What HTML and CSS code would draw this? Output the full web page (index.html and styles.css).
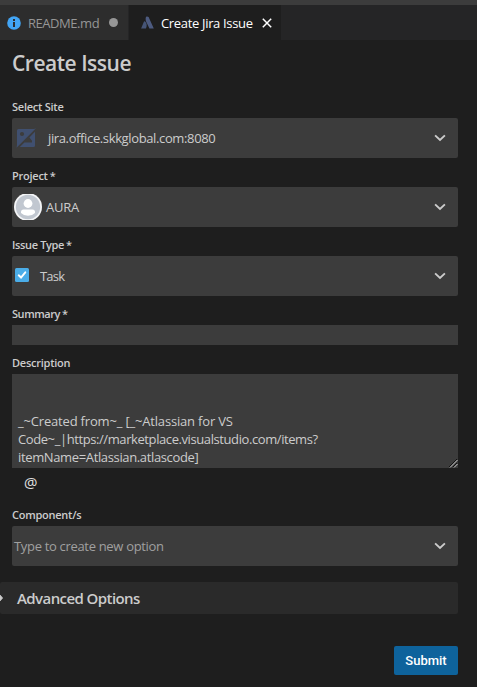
FILE: index.html
```html
<!DOCTYPE html>
<html lang="en">
<head>
<meta charset="utf-8">
<title>Create Jira Issue</title>
<link rel="stylesheet" href="styles.css">
</head>
<body>
<nav class="tabs">
  <div class="tab">
    <svg class="info" width="14" height="14" viewBox="0 0 14 14"><circle cx="7" cy="7" r="6.8" fill="#42a5f5"/><path d="M6 3h2v2H6zM6 6h2v5H6z" fill="#2d2d2d"/></svg>
    <span class="readme">README.md</span>
    <span class="dirty"></span>
  </div>
  <div class="tab active">
    <svg class="atlas" width="13" height="13" viewBox="0 0 13 13"><path d="M5 .8Q6.3 0 7.6 1L12.8 12.4H8.4L6.3 8Q3.8 4 5 .8Z" fill="#4d5b80"/><path d="M3 5.4Q3.8 5 4.4 5.8Q6.7 8.5 5 12.4H.1Z" fill="#465577"/></svg>
    <span class="jira">Create Jira Issue</span>
    <svg class="close" width="10" height="10" viewBox="0 0 10 10"><path d="M.8.8l8.4 8.4M9.2.8L.8 9.2" stroke="#fff" stroke-width="1.5"/></svg>
  </div>
</nav>
<main class="page">
  <h1><span class="title">Create Issue</span></h1>
  <section class="field">
    <label><span class="l-site">Select Site</span></label>
    <div class="select">
      <svg class="site-icon" width="20" height="20" viewBox="0 0 20 20"><path d="M2.5 1H18L20 .3L.5 19.8L1 17V2.5Q1 1 2.5 1Z" fill="#405070"/><path d="M19 3.8V17.5Q19 19 17.5 19H3.8L8.4 14.4H16V12.8L13.4 9.4Z" fill="#405070"/><circle cx="6" cy="6" r="2.1" fill="#3c3c3c"/></svg>
      <span class="t-site">jira.office.skkglobal.com:8080</span>
      <svg class="chevron" width="12" height="8" viewBox="0 0 12 8"><path d="M1.1 1.4L6 6L10.9 1.4" fill="none" stroke="#ccc" stroke-width="1.9"/></svg>
    </div>
  </section>
  <section class="field">
    <label><span class="l-project">Project</span><span class="star">*</span></label>
    <div class="select">
      <svg class="avatar" width="28" height="26" viewBox="0 1 28 26"><circle cx="14" cy="14" r="14" fill="#f4f5f7"/><circle cx="14" cy="14" r="12.2" fill="#c1c7d0"/><circle cx="14" cy="10.5" r="4.4" fill="#fff"/><path d="M7 19Q7 16.5 9.5 16.5H18.5Q21 16.5 21 19V20Q18.5 22.7 14 22.7T7 20Z" fill="#fff"/></svg>
      <span class="t-aura">AURA</span>
      <svg class="chevron" width="12" height="8" viewBox="0 0 12 8"><path d="M1.1 1.4L6 6L10.9 1.4" fill="none" stroke="#ccc" stroke-width="1.9"/></svg>
    </div>
  </section>
  <section class="field">
    <label><span class="l-type">Issue Type</span><span class="star">*</span></label>
    <div class="select">
      <svg class="task-icon" width="14" height="14" viewBox="0 0 14 14"><rect width="14" height="14" rx="1.5" fill="#4bade8"/><path d="M3.7 7.3L6 9.5L10.3 4.3" fill="none" stroke="#fff" stroke-width="1.9" stroke-linecap="round"/></svg>
      <span class="t-task">Task</span>
      <svg class="chevron" width="12" height="8" viewBox="0 0 12 8"><path d="M1.1 1.4L6 6L10.9 1.4" fill="none" stroke="#ccc" stroke-width="1.9"/></svg>
    </div>
  </section>
  <section class="field">
    <label><span class="l-summary">Summary</span><span class="star">*</span></label>
    <div class="summary"></div>
  </section>
  <section class="field">
    <label><span class="l-desc">Description</span></label>
    <div class="description">
      <div><span class="d1">_~Created from~_ [_~Atlassian for VS</span></div>
      <div><span class="d2">Code~_|https://marketplace.visualstudio.com/items?</span></div>
      <div><span class="d3">itemName=Atlassian.atlascode]</span></div>
      <svg class="grip" width="9" height="9" viewBox="0 0 9 9"><path d="M0 8L8 0M4 8L8 4" stroke="#111" stroke-width="1"/><path d="M1 8.5L8.5 1M5 8.5L8.5 5" stroke="#ccc" stroke-width="1"/></svg>
    </div>
    <div class="mention"><span class="at">@</span></div>
  </section>
  <section class="field">
    <label><span class="l-comp">Component/s</span></label>
    <div class="select">
      <span class="t-option">Type to create new option</span>
      <svg class="chevron" width="12" height="8" viewBox="0 0 12 8"><path d="M1.1 1.4L6 6L10.9 1.4" fill="none" stroke="#ccc" stroke-width="1.9"/></svg>
    </div>
  </section>
  <div class="advanced">
    <svg width="4" height="8" viewBox="0 0 4 8"><path d="M0 1L2.6 4L0 7" fill="#ccc" stroke="#ccc" stroke-width=".8"/></svg>
    <span class="t-adv">Advanced Options</span>
  </div>
  <div class="actions"><button><span class="t-submit">Submit</span></button></div>
</main>
</body>
</html>
```
FILE: styles.css
```css
* { box-sizing: border-box; }
body { margin: 0; height: 687px; overflow: hidden; background: #1e1e1e; color: #ccc; font: 13px "Open Sans", "Noto Sans", sans-serif; }
span { white-space: nowrap; }
svg { display: block; flex: none; }
.tabs { display: flex; height: 40px; border-top: 5px solid #3c3c3c; background: #252526; }
.tab { display: flex; align-items: center; width: 128px; margin-right: 1px; padding-left: 7px; background: #2d2d2d; color: #969696; }
.tab.active { width: 152px; padding-left: 12px; margin: 0; background: #1e1e1e; color: #fff; }
.readme { width: 73px; margin-left: 7px; letter-spacing: -.45px; }
.dirty { width: 9px; height: 9px; margin-left: 8px; border-radius: 50%; background: #969696; }
.jira { width: 94px; margin-left: 7px; letter-spacing: -.33px; }
.close { margin-left: 7px; }
.page { padding: 0 19px 0 12px; }
h1 { height: 56px; margin: 0; padding-top: 8px; font-size: 21px; line-height: 30px; font-weight: 600; }
.title { letter-spacing: -.48px; }
.field { margin-bottom: 7px; }
label { display: flex; height: 22px; font-size: 11px; line-height: 22px; font-weight: 600; letter-spacing: -.25px; }
.l-type { letter-spacing: -.35px; }
.l-summary { letter-spacing: -.45px; }
.star { margin-left: 2px; }
.select { display: flex; align-items: center; height: 40px; padding: 0 12px 0 2px; border-radius: 2px; background: #3c3c3c; }
.chevron { margin-left: auto; }
.site-icon { margin-left: 2px; }
.t-site { margin-left: 12px; letter-spacing: -.37px; }
.t-aura { margin-left: 4px; letter-spacing: -.2px; }
.task-icon { margin: -3px 0 0 1px; }
.t-task { margin-left: 11px; letter-spacing: -.8px; }
.t-option { color: #a0a0a0; letter-spacing: -.32px; }
.summary { height: 20px; background: #3c3c3c; }
.description { position: relative; height: 94px; padding: 38px 6px 1px; background: #3c3c3c; line-height: 18px; }
.d1 { letter-spacing: -.18px; }
.d2 { letter-spacing: -.41px; }
.d3 { letter-spacing: -.36px; }
.grip { position: absolute; right: 0; bottom: 0; }
.mention { height: 29px; padding-left: 12px; color: #e0e0e0; font-size: 15px; line-height: 28px; }
.advanced { display: flex; align-items: center; height: 32px; margin: 16px 0 32px -12px; border-radius: 2px; background: #2a2a2a; font-size: 15px; font-weight: 600; }
.t-adv { margin-left: 13px; letter-spacing: -.58px; }
.actions { display: flex; justify-content: flex-end; }
button { width: 64px; height: 29px; padding: 0; border: 0; border-radius: 2px; background: #0e639c; color: #fff; font: 500 13px Roboto, sans-serif; }
```
